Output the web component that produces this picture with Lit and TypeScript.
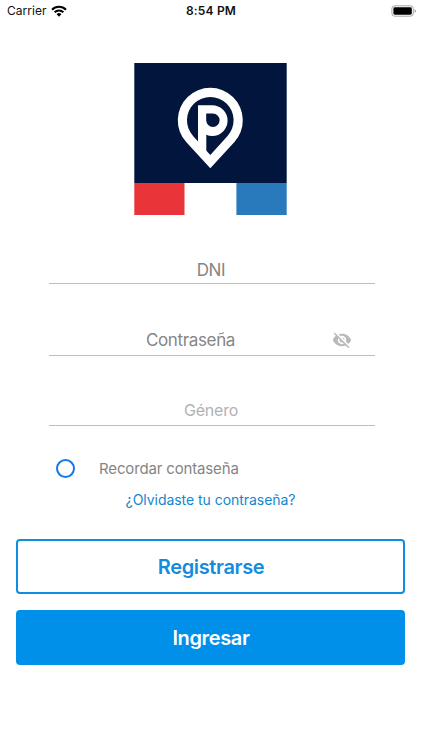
import { LitElement, html, css } from "lit";
import { customElement } from "lit/decorators.js";

@customElement("app-root")
export class AppRoot extends LitElement {
  static styles = css`
    :host { display: block; font-family: Inter, "Liberation Sans", sans-serif; background: #fff; height: 750px; overflow: hidden; }
    * { box-sizing: border-box; }
    .screen { display: flex; flex-direction: column; height: 750px; }
    .status { display: grid; grid-template-columns: 1fr auto 1fr; align-items: center; height: 21px; padding: 0 5px 0 7px; color: #111; flex: none; }
    .carrier { display: flex; align-items: center; gap: 4px; font-size: 12px; letter-spacing: 0.04px; }
    .time { font-size: 12px; font-weight: 600; letter-spacing: 0.18px; padding-right: 2px; }
    .battery { justify-self: end; display: block; }
    .wifi { display: block; }
    .logo { display: block; margin: 42px 0 0 134px; flex: none; }
    .fields { margin: 40px 47px 0 49px; }
    .field { display: grid; grid-template-columns: 42px 1fr 42px; align-items: center; height: 29px; padding-top: 1px; border-bottom: 1px solid #bdbdbd; margin-bottom: 42px; color: #858585; font-size: 17px; letter-spacing: -0.35px; }
    .label { grid-column: 2; text-align: center; padding-right: 2px; }
    .password { height: 30px; padding: 0 0 2px; margin-bottom: 40px; }
    .password .label { padding-right: 43px; }
    .pale { color: #b2b2b2; font-size: 16px; letter-spacing: -0.2px; height: 30px; padding: 0 0 2px; }
    .eye { display: block; margin-left: -1px; }
    .remember { display: flex; align-items: center; height: 24px; margin: -12px 0 0 56px; color: #858585; font-size: 15px; letter-spacing: -0.15px; }
    .radio { width: 19px; height: 19px; border: 2px solid #1478ea; border-radius: 50%; margin-right: 24px; }
    .forgot { color: #1187d0; font-size: 14px; letter-spacing: -0.04px; text-align: center; height: 20px; line-height: 20px; margin-top: 10px; padding-right: 1px; }
    .actions { display: flex; flex-direction: column; gap: 16px; margin: 29px 17px 0 16px; }
    .btn { height: 55px; border: 2px solid #0b8fe3; border-radius: 4px; font: 600 20px Inter, "Liberation Sans", sans-serif; letter-spacing: -0.35px; color: #138ce0; background: #fff; padding: 0 0 0 1px; }
    .primary { background: #0090ea; border-color: #0090ea; color: #fff; }
  `;

  render() {
    return html`
      <div class="screen">
        <div class="status">
          <div class="carrier">
            <span class="cname">Carrier</span>
            <svg class="wifi" width="16" height="12" viewBox="0 0 16 12" fill="none" stroke="#000" stroke-width="2">
              <path d="M1 4.7a10 10 0 0 1 14 0" />
              <path d="M3.6 7.3a6.3 6.3 0 0 1 8.8 0" />
              <path d="M5.6 9.2a3.5 3.5 0 0 1 4.8 0L8 11.7z" fill="#000" stroke="none" />
            </svg>
          </div>
          <span class="time">8:54 PM</span>
          <svg class="battery" width="26" height="12" viewBox="0 0 26 12">
            <rect x="0.9" y="0.8" width="21.4" height="10.4" rx="2.8" fill="none" stroke="#a4a4a4" />
            <rect x="2.4" y="2.3" width="18.4" height="7.4" rx="1.4" fill="#000" />
            <path d="M23.6 4.2q1.4 .5 1.4 1.8t-1.4 1.8z" fill="#999" />
          </svg>
        </div>

        <svg class="logo" width="153" height="152" viewBox="134 63 153 152">
          <path fill="#02153c" d="M134.3 63h152.4v120H134.3z" />
          <path fill="#e93439" d="M134.3 183h50.2v32h-50.2z" />
          <path fill="#287abc" d="M236.4 183h50.3v32h-50.3z" />
          <path fill="#fff" fill-rule="evenodd" d="M210.3 168.3L186.4 142.3A32.5 32.5 0 1 1 234.2 142.3ZM210.3 155L193.05 135.95A23.3 23.3 0 1 1 227.55 135.95Z" />
          <path fill="#fff" fill-rule="evenodd" d="M198 105.2H212.2a15.4 15.4 0 0 1 0 30.8Q209 136 206.3 134.8V151.5L198 145ZM206.2 113.5V120.3a6.7 6.7 0 1 0 6.7-6.8Z" />
        </svg>

        <div class="fields">
          <div class="field"><span class="label">DNI</span></div>
          <div class="field password">
            <span class="label">Contraseña</span>
            <svg class="eye" width="20" height="20" viewBox="0 0 24 24" fill="#b9b9b9">
              <path d="M12 7c2.76 0 5 2.24 5 5 0 .65-.13 1.26-.36 1.83l2.92 2.92c1.51-1.26 2.7-2.89 3.43-4.75-1.73-4.39-6-7.5-11-7.5-1.4 0-2.74.25-3.98.7l2.16 2.16C10.74 7.13 11.35 7 12 7zM2 4.27l2.28 2.28.46.46C3.08 8.3 1.78 10.02 1 12c1.73 4.39 6 7.5 11 7.5 1.55 0 3.03-.3 4.38-.84l.42.42L19.73 22 21 20.73 3.27 3 2 4.27zM7.53 9.8l1.55 1.55c-.05.21-.08.43-.08.65 0 1.66 1.34 3 3 3 .22 0 .44-.03.65-.08l1.55 1.55c-.67.33-1.41.53-2.2.53-2.76 0-5-2.24-5-5 0-.79.2-1.53.53-2.2zm4.31-.78l3.15 3.15.02-.16c0-1.66-1.34-3-3-3l-.17.01z" />
            </svg>
          </div>
          <div class="field pale"><span class="label">Género</span></div>
        </div>

        <div class="remember"><span class="radio"></span><span class="rtext">Recordar contaseña</span></div>
        <div class="forgot">¿Olvidaste tu contraseña?</div>

        <div class="actions">
          <button class="btn">Registrarse</button>
          <button class="btn primary">Ingresar</button>
        </div>
      </div>
    `;
  }
}
